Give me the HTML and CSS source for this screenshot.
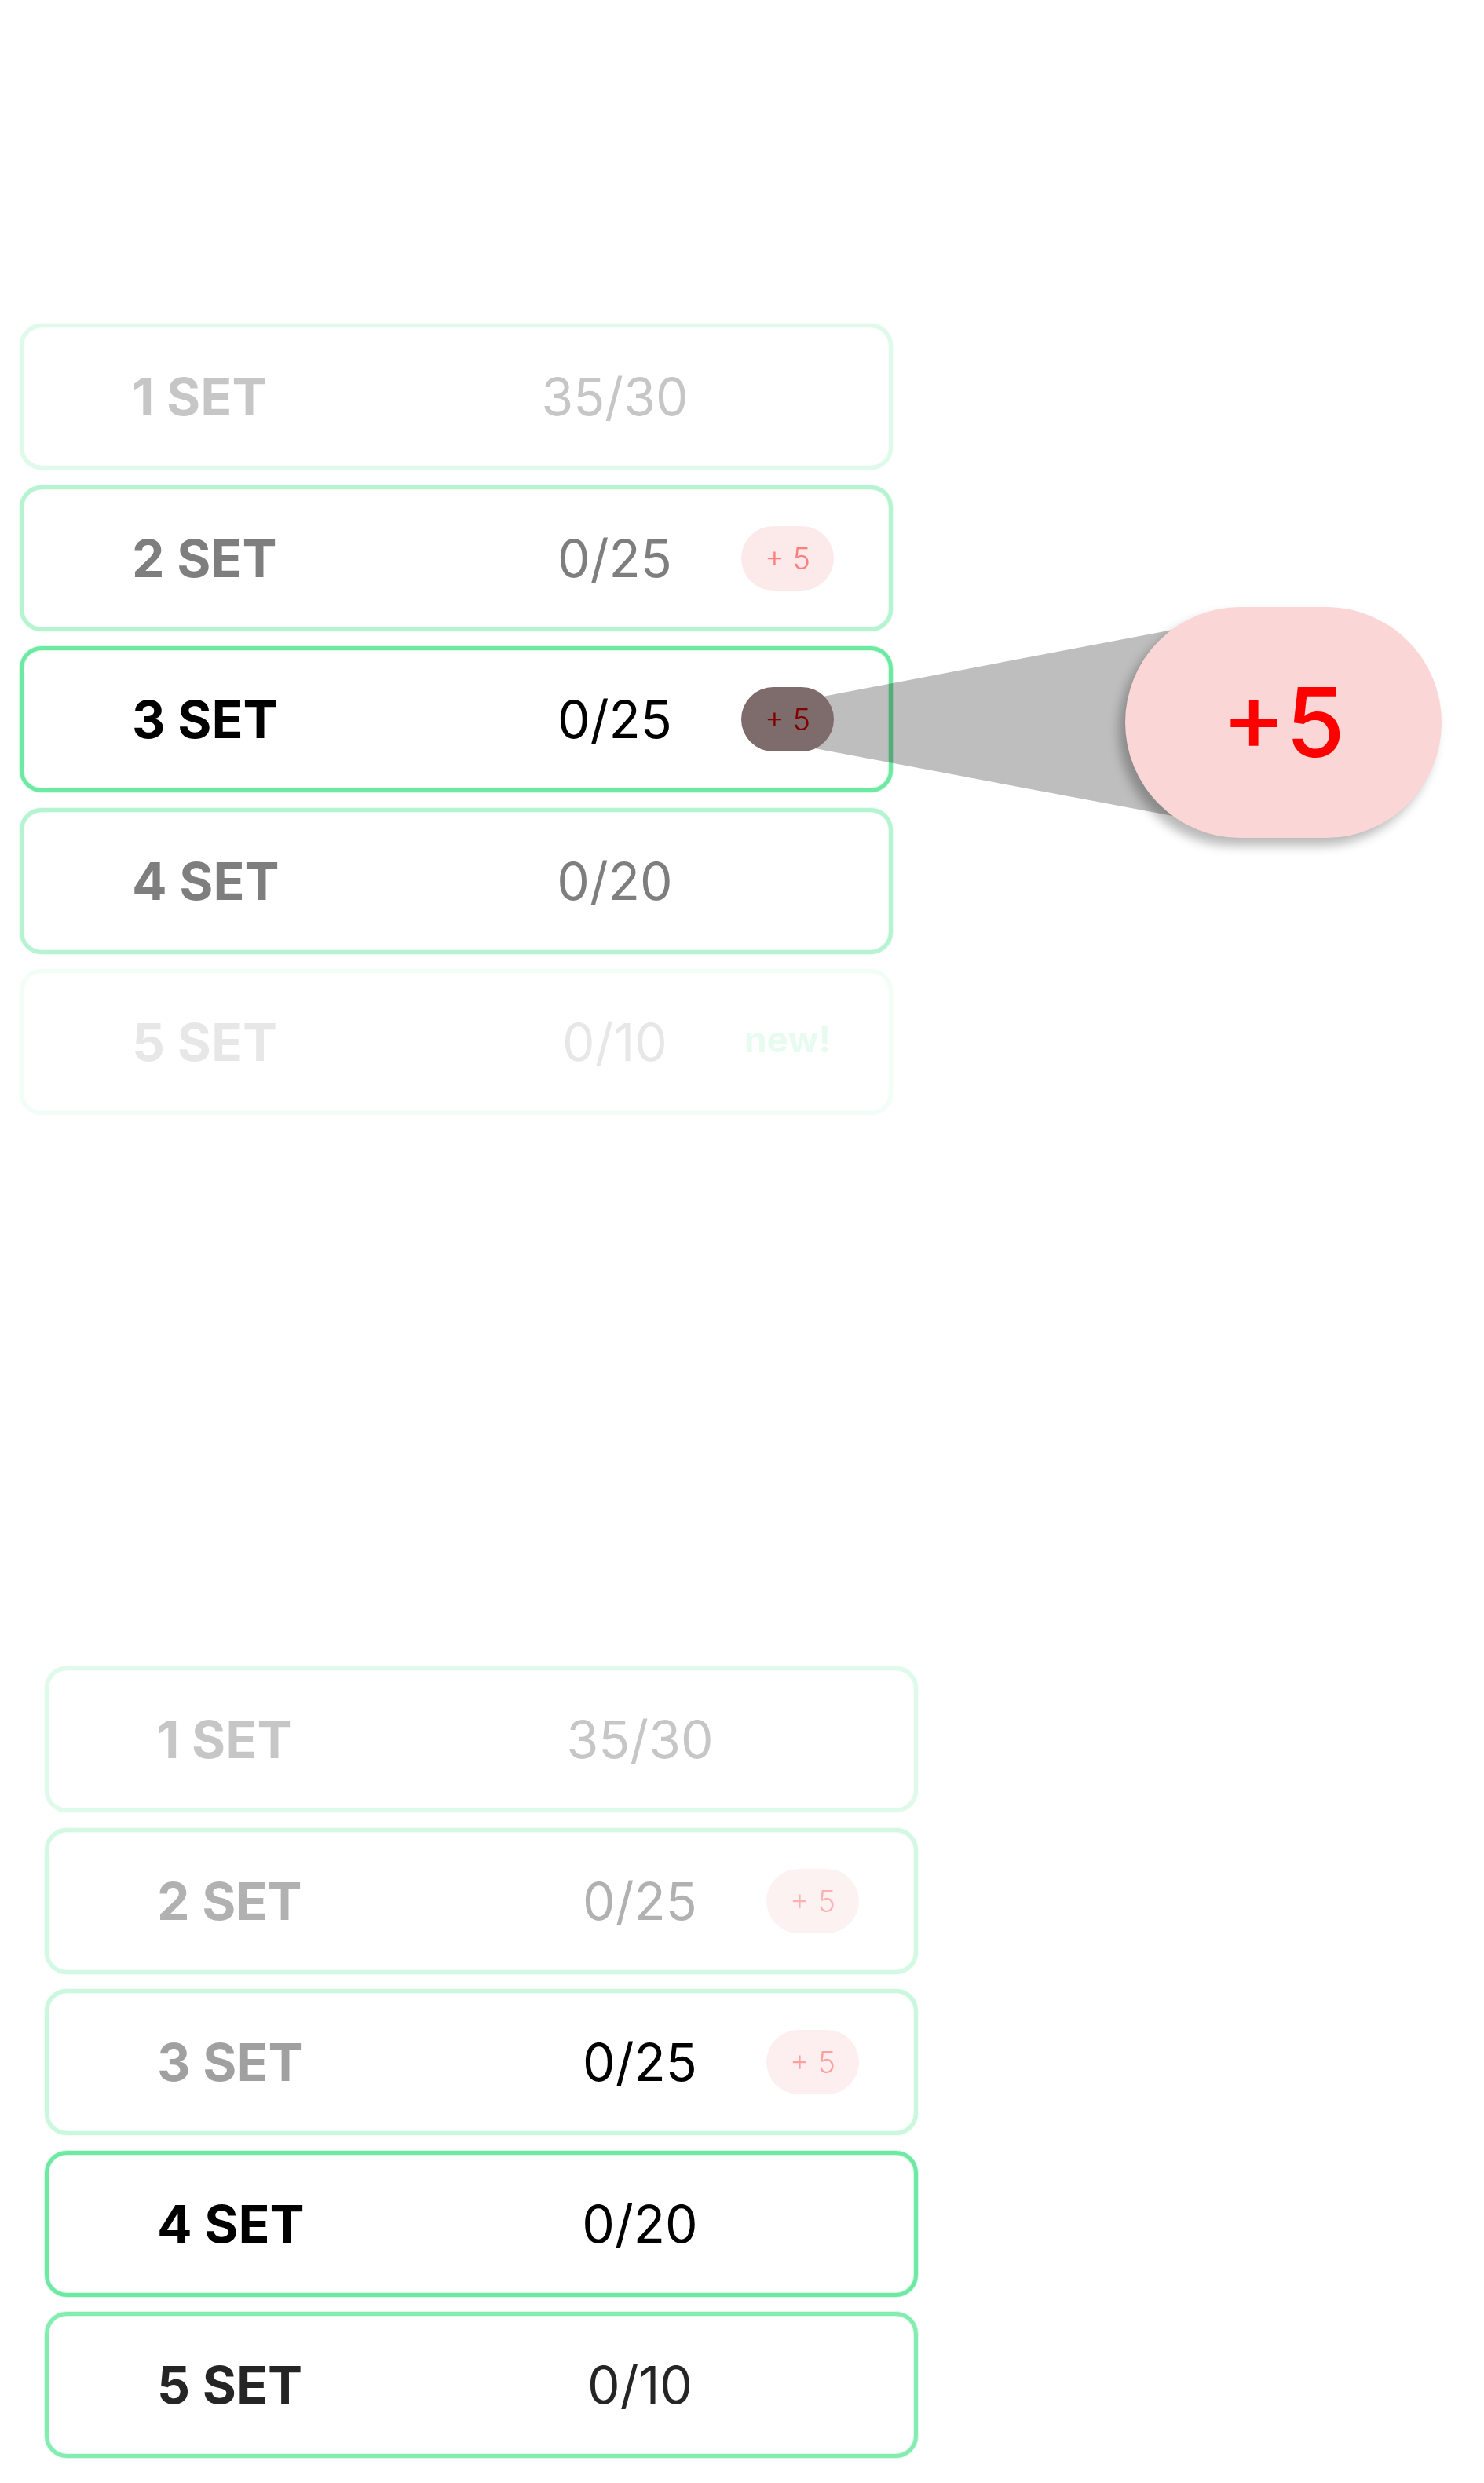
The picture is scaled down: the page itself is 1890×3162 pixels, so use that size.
FILE: index.html
```html
<!DOCTYPE html>
<html>

<head>
    <meta charset="utf-8" />
    <title>Sets</title>
    <link rel="stylesheet" href="styles.css">
</head>

<body>
    <div class="page">
        <div class="set-list first-list">
            <div class="set fade-22">
                <span class="set-name">1 SET</span>
                <span class="set-count">35/30</span>
                <span class="set-extra"></span>
            </div>
            <div class="set fade-50">
                <span class="set-name">2 SET</span>
                <span class="set-count">0/25</span>
                <span class="set-extra"><span class="badge">+ 5</span></span>
            </div>
            <div class="set fade-100">
                <span class="set-name">3 SET</span>
                <span class="set-count">0/25</span>
                <span class="set-extra"><span class="badge under-lens">+ 5</span></span>
            </div>
            <div class="set fade-50">
                <span class="set-name">4 SET</span>
                <span class="set-count">0/20</span>
                <span class="set-extra"></span>
            </div>
            <div class="set fade-9">
                <span class="set-name">5 SET</span>
                <span class="set-count">0/10</span>
                <span class="set-extra"><span class="new-tag">new!</span></span>
            </div>
        </div>

        <div class="set-list second-list">
            <div class="set fade-22">
                <span class="set-name">1 SET</span>
                <span class="set-count">35/30</span>
                <span class="set-extra"></span>
            </div>
            <div class="set fade-30">
                <span class="set-name">2 SET</span>
                <span class="set-count">0/25</span>
                <span class="set-extra"><span class="badge">+ 5</span></span>
            </div>
            <div class="set fade-37">
                <span class="set-name">3 SET</span>
                <span class="set-count live">0/25</span>
                <span class="set-extra"><span class="badge">+ 5</span></span>
            </div>
            <div class="set fade-100">
                <span class="set-name">4 SET</span>
                <span class="set-count">0/20</span>
                <span class="set-extra"></span>
            </div>
            <div class="set fade-85">
                <span class="set-name">5 SET</span>
                <span class="set-count">0/10</span>
                <span class="set-extra"></span>
            </div>
        </div>

        <!-- magnified badge callout -->
        <svg class="lens-cone" width="560" height="280" viewBox="0 0 560 280">
            <polygon points="10,116 530,17 530,264 10,166" fill="rgba(0,0,0,0.255)" />
        </svg>
        <div class="lens">+5</div>
    </div>
</body>

</html>
```

FILE: styles.css
```css
body {
    margin: 0;
    background: #fff;
    font-family: Inter, "Noto Sans", sans-serif;
    color: #000;
}

.page {
    position: relative;
    width: 1890px;
    height: 3162px;
    overflow: hidden;
}

.set-list {
    display: flex;
    flex-direction: column;
    gap: 19.5px;
    width: 1112px;
}

.first-list {
    padding: 412px 0 0 25px;
}

.second-list {
    padding: 702px 0 0 57px;
}

.fade-9 { --fade: 0.09; }
.fade-22 { --fade: 0.22; }
.fade-30 { --fade: 0.3; }
.fade-37 { --fade: 0.37; }
.fade-50 { --fade: 0.5; }
.fade-85 { --fade: 0.85; }
.fade-100 { --fade: 1; }

.set {
    box-sizing: border-box;
    height: 186px;
    border: 5px solid rgba(110, 233, 163, var(--fade));
    border-radius: 28px;
    box-shadow: 0 0 2px rgba(110, 233, 163, var(--fade)), inset 0 0 2px rgba(110, 233, 163, var(--fade));
    display: flex;
    align-items: center;
    padding-left: 138px;
    line-height: 1;
}

.set-name {
    width: 465px;
    font-size: 66px;
    font-weight: 700;
    opacity: var(--fade);
}

.set-count {
    width: 300px;
    text-align: center;
    font-size: 66px;
    font-weight: 400;
    opacity: var(--fade);
}

.set-count.live {
    opacity: 1;
}

.set-extra {
    width: 120px;
    margin-left: 10px;
    display: flex;
    justify-content: center;
    opacity: var(--fade);
}

.badge {
    width: 118px;
    height: 82px;
    border-radius: 41px;
    background: #fbd5d5;
    color: #ff0000;
    font-size: 38px;
    font-weight: 300;
    display: flex;
    align-items: center;
    justify-content: center;
    white-space: pre;
}

.badge.under-lens {
    position: relative;
    z-index: 2;
    filter: brightness(0.5);
}

.new-tag {
    font-size: 46px;
    font-weight: 700;
    color: #00d75f;
    margin-top: -8px;
}

.lens-cone {
    position: absolute;
    left: 990px;
    top: 780px;
    z-index: 1;
}

.lens {
    position: absolute;
    left: 1433px;
    top: 773px;
    width: 403px;
    height: 294px;
    border-radius: 147px;
    background: #fbd6d6;
    box-shadow: -8px 10px 14px rgba(0, 0, 0, 0.28);
    z-index: 1;
    display: flex;
    align-items: center;
    justify-content: center;
    color: #ff0000;
    font-size: 122px;
    font-weight: 500;
    line-height: 1;
}
```
